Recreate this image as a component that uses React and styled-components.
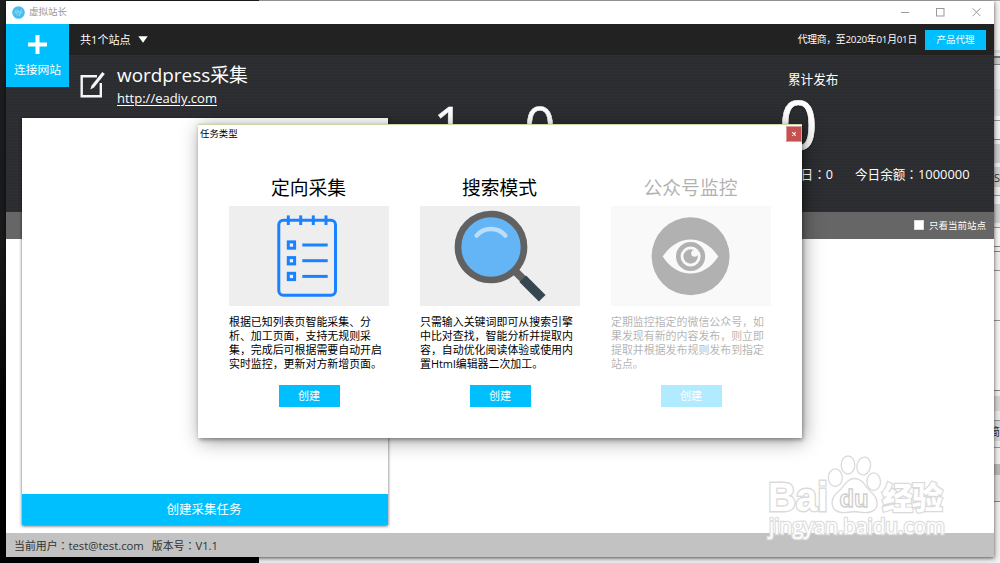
import React from "react";
import styled, { createGlobalStyle, css } from "styled-components";

const GlobalStyle = createGlobalStyle`
  * { box-sizing: border-box; }
  html, body { margin: 0; padding: 0; overflow: hidden; }
  body {
    font-family: "Open Sans", "Noto Sans CJK SC", sans-serif;
    font-size: 11px;
    color: #000;
  }
`;

const weave = css`
  background-color: #2b2d30;
  background-image:
    repeating-linear-gradient(0deg, rgba(255, 255, 255, 0.014) 0 1px, transparent 1px 3px),
    repeating-linear-gradient(90deg, rgba(0, 0, 0, 0.04) 0 1px, transparent 1px 4px);
`;

const Desktop = styled.div`
  position: relative;
  width: 1000px;
  height: 563px;
  overflow: hidden;
  display: flex;
  background: #f2f2f2;
`;

const Wallpaper = styled.div`
  width: 259px;
  height: 563px;
  background: linear-gradient(#1d1f21 0, #191a1b 240px, #141211 310px, #000 430px);
`;

const BackWindow = styled.div`
  flex: 1;
  display: flex;
  flex-direction: column;
  border-top: 1px solid #aaa;
`;

const Band = styled.div`
  height: ${(p) => p.$h}px;
  background: ${(p) => p.$c};
  flex: none;
  display: flex;
  align-items: center;
  justify-content: flex-end;
  overflow: hidden;
  font-size: 11px;
  color: #333;
`;

const Window = styled.div`
  position: absolute;
  left: 6px;
  top: 1px;
  width: 988px;
  height: 556px;
  display: flex;
  flex-direction: column;
  background: #fff;
  box-shadow: 0 1px 3px rgba(0, 0, 0, 0.5), 1px 2px 7px rgba(0, 0, 0, 0.25);
`;

const TitleBar = styled.div`
  height: 23px;
  flex: none;
  display: flex;
  align-items: center;
  padding: 0 13px 1px 6px;
  color: #999;
  font-size: 9.5px;
`;

const AppName = styled.span`
  margin-left: 4px;
  flex: 1;
  line-height: 22px;
`;

const TopBar = styled.div`
  height: 31px;
  flex: none;
  background: #222;
  color: #fff;
  display: flex;
  align-items: center;
  padding: 0 8px 0 74px;
`;

const SiteCount = styled.div`
  display: flex;
  align-items: center;
  gap: 7px;
  flex: 1;
  font-size: 11.1px;
  padding-bottom: 1px;
`;

const License = styled.span`
  font-size: 9.8px;
  letter-spacing: -0.24px;
  margin-right: 8px;
  padding-bottom: 1px;
`;

const AgentButton = styled.button`
  width: 61px;
  height: 20px;
  border: 0;
  padding: 0;
  background: #00bfff;
  color: #fff;
  font: 9.5px/20px "Open Sans", "Noto Sans CJK SC", sans-serif;
  margin-top: 1px;
`;

const Connect = styled.div`
  position: absolute;
  left: 0;
  top: 23px;
  width: 63px;
  height: 63px;
  background: #00bfff;
  color: #fff;
  display: flex;
  flex-direction: column;
  align-items: center;
  padding-top: 11px;
  gap: 7px;
  font-size: 11.8px;
  line-height: 16px;
`;

const Hero = styled.div`
  ${weave}
  height: 157px;
  flex: none;
  color: #fff;
  display: flex;
  padding-left: 74px;
`;

const Site = styled.div`
  width: 352px;
  display: flex;
  gap: 12px;
`;

const EditMark = styled.svg`
  margin-top: 16px;
  flex: none;
`;

const SiteName = styled.div`
  font-size: 18.9px;
  line-height: 24px;
  margin-top: 8px;
`;

const SiteUrl = styled.div`
  font-size: 13px;
  line-height: 18px;
  margin-top: 2px;
  text-decoration: underline;
  text-underline-offset: 2px;
  text-decoration-thickness: 1px;
`;

const Counters = styled.div`
  width: 356px;
  display: flex;
  gap: 57px;
  padding-top: 43px;
  font-size: 54px;
  line-height: 54px;
  -webkit-text-stroke: 0.5px #fff;
`;

const Counter = styled.span`
  width: 34px;
  text-align: center;
`;

const Totals = styled.div`
  display: flex;
  flex-direction: column;
  font-size: 12.6px;
  line-height: 18px;
  padding-top: 16px;
`;

const TotalValue = styled.div`
  font-size: 68px;
  line-height: 66px;
  height: 76px;
  padding-top: 2px;
  margin-left: -9px;
  -webkit-text-stroke: 0.6px #fff;
  text-shadow: 0 1px 2px rgba(0, 0, 0, 0.5);
`;

const TotalsRow = styled.div`
  display: flex;
  gap: 22px;
  white-space: nowrap;
`;

const Amount = styled.span`
  font-size: 12.9px;
`;

const WideColon = styled.span`
  font-family: "Noto Sans CJK TC", sans-serif;
`;

const FilterBar = styled.div`
  height: 27px;
  flex: none;
  background: #666;
  color: #fff;
  display: flex;
  align-items: center;
  justify-content: flex-end;
  gap: 5px;
  padding: 0 8px 1px 0;
  font-size: 9.5px;
`;

const CheckBox = styled.span`
  width: 10px;
  height: 10px;
  background: #fff;
  border: 1px solid #ddd;
`;

const Workspace = styled.div`
  flex: 1;
  background: #fff;
`;

const StatusBar = styled.div`
  height: 24px;
  flex: none;
  background: #c2c2c2;
  color: #333;
  display: flex;
  align-items: center;
  gap: 8px;
  padding: 0 0 1px 8px;
  font-size: 10.9px;
`;

const StatusValue = styled.span`
  font-size: 11.3px;
`;

const TaskPanel = styled.div`
  position: absolute;
  left: 16px;
  top: 117px;
  width: 366px;
  height: 407px;
  background: #fff;
  box-shadow: 0 1px 3px rgba(0, 0, 0, 0.65);
  display: flex;
  flex-direction: column;
  justify-content: flex-end;
`;

const NewTask = styled.button`
  height: 31px;
  border: 0;
  padding: 0 2px 0 0;
  background: #00bfff;
  color: #fff;
  font: 12.5px/31px "Open Sans", "Noto Sans CJK SC", sans-serif;
`;

const Dialog = styled.div`
  position: absolute;
  left: 198px;
  top: 124px;
  width: 604px;
  height: 314px;
  background: #fff;
  border-top: 1px solid #c9d8a4;
  box-shadow: 1px 2px 4px rgba(0, 0, 0, 0.35), 2px 3px 18px rgba(0, 0, 0, 0.38);
  display: flex;
  flex-direction: column;
`;

const DialogHead = styled.div`
  height: 16px;
  display: flex;
  justify-content: space-between;
  align-items: center;
  padding: 0 0 0 2px;
  font-size: 9.4px;
`;

const CloseButton = styled.button`
  width: 16px;
  height: 16px;
  border: 1px solid #dc9a9a;
  padding: 0;
  background: #c75050;
  margin-top: 1px;
  display: flex;
  align-items: center;
  justify-content: center;
`;

const Choices = styled.div`
  display: flex;
  gap: 31px;
  padding: 34px 0 0 31px;
`;

const Choice = styled.div`
  width: 160px;
  display: flex;
  flex-direction: column;
  align-items: center;
  opacity: ${(p) => (p.$off ? 0.3 : 1)};
`;

const ChoiceTitle = styled.div`
  font-size: 18.8px;
  line-height: 26px;
  height: 31px;
  padding-right: 1px;
`;

const Picture = styled.svg`
  display: block;
  width: 160px;
  height: 100px;
  background: #eee;
`;

const Description = styled.div`
  width: 160px;
  height: 79px;
  padding-top: 9px;
  font-size: 10.93px;
  line-height: 14px;
  white-space: nowrap;
`;

const CreateButton = styled.button`
  width: 61px;
  height: 22px;
  border: 0;
  padding: 0;
  background: #00bfff;
  color: #fff;
  font: 11px/22px "Open Sans", "Noto Sans CJK SC", sans-serif;
`;

const Watermark = styled.svg`
  position: absolute;
  left: 760px;
  top: 448px;
`;

const bands = [
  [49, "#f7f7f7"], [3, "#dedede"], [3, "#f0f0f0"], [2, "#777"], [6, "#cfcfcf"], [1, "#888"],
  [24, "#f2f2f2"], [27, "#e6e6e6"], [4, "#fafafa"], [1, "#999"], [18, "#f6f6f6"], [1, "#888"],
  [4, "#f2f2f2"], [19, "#d2d2d2"], [4, "#f2f2f2"], [20, "#d4d4d4", "S"], [8, "#f2f2f2"], [1, "#999"],
  [8, "#f4f4f4"], [19, "#d4d4d4"], [4, "#f2f2f2"], [1, "#999"], [18, "#fafafa"], [1, "#888"],
  [4, "#f4f4f4"], [1, "#888"], [18, "#f4f4f4"], [1, "#999"], [49, "#fafafa"], [1, "#999"],
  [69, "#fafafa"], [1, "#888"], [5, "#f4f4f4"], [15, "#d9d9d9"], [9, "#efefef"], [1, "#999"],
  [20, "#dadada", "简"], [6, "#efefef"], [1, "#999"], [16, "#f4f4f4"], [11, "#bcbcbc"],
  [26, "#e4e4e4"], [1, "#888"], [61, "#f3f3f3"],
];

const ListArt = () => (
  <Picture viewBox="0 0 160 100" fill="none" stroke="#1a82ff" strokeWidth="3">
    <rect x="49.8" y="14.2" width="56.7" height="75" rx="4.5" />
    {[59.3, 71.7, 84.3, 97].map((x) => (
      <path key={x} d={`M${x} 9.4V19`} />
    ))}
    {[39, 54.7, 70.4].map((y) => (
      <g key={y}>
        <rect x="59.3" y={y - 3.1} width="6.3" height="6.3" />
        <path d={`M73.3 ${y}H98.7`} />
      </g>
    ))}
  </Picture>
);

const SearchArt = () => (
  <Picture viewBox="0 0 160 100" fill="none">
    <path d="M92 62L104 74" stroke="#616161" strokeWidth="8" />
    <path d="M102.7 72.7L122.2 92.3" stroke="#37474f" strokeWidth="9.4" />
    <circle cx="71" cy="41" r="33" fill="#64b5f6" stroke="#616161" strokeWidth="6.7" />
    <path d="M56.6 29.6A18.9 18.9 0 0 1 85.4 29.6" stroke="#bbdefb" strokeWidth="4.4" strokeLinecap="round" />
  </Picture>
);

const EyeArt = () => (
  <Picture viewBox="0 0 160 100">
    <circle cx="79.6" cy="50.3" r="39" fill="#000" />
    <path d="M51.7 50.5C66.5 27.8 92.5 27.8 107.3 50.5C92.5 73.3 66.5 73.3 51.7 50.5Z" fill="#eee" />
    <circle cx="79.6" cy="50.5" r="12.3" fill="none" stroke="#000" strokeWidth="4.6" />
    <circle cx="79.6" cy="50.5" r="7.2" fill="#000" />
    <circle cx="83.6" cy="47.3" r="3.4" fill="#eee" />
  </Picture>
);

const choices = [
  {
    title: "定向采集",
    art: <ListArt />,
    lines: ["根据已知列表页智能采集、分", "析、加工页面，支持无规则采", "集，完成后可根据需要自动开启", "实时监控，更新对方新增页面。"],
  },
  {
    title: "搜索模式",
    art: <SearchArt />,
    lines: ["只需输入关键词即可从搜索引擎", "中比对查找，智能分析并提取内", "容，自动优化阅读体验或使用内", "置Html编辑器二次加工。"],
  },
  {
    title: "公众号监控",
    art: <EyeArt />,
    off: true,
    lines: ["定期监控指定的微信公众号，如", "果发现有新的内容发布，则立即", "提取并根据发布规则发布到指定", "站点。"],
  },
];

export default function App() {
  return (
    <Desktop>
      <GlobalStyle />
      <Wallpaper />
      <BackWindow>
        {bands.map(([h, c, t], i) => (
          <Band key={i} $h={h} $c={c}>{t}</Band>
        ))}
      </BackWindow>

      <Window>
        <TitleBar>
          <svg width="13" height="13" viewBox="0 0 13 13" fill="none">
            <circle cx="6.5" cy="6.5" r="6.3" fill="#49bdec" />
            <path d="M3 4.2L5.8 9.8M4.8 3L8 8.8M9.8 3.2L7.2 9.8M2.2 7.4C5 5 8 5 10.8 7" stroke="#a5dff7" strokeWidth=".7" />
          </svg>
          <AppName>虚拟站长</AppName>
          <svg width="80" height="10" viewBox="0 0 80 10" fill="none" stroke="#999">
            <path d="M0 5.5H8" />
            <rect x="35.5" y="1.5" width="7.5" height="7.5" />
            <path d="M71.5 1.2L79.5 9.2M79.5 1.2L71.5 9.2" />
          </svg>
        </TitleBar>
        <TopBar>
          <SiteCount>
            共1个站点
            <svg width="10" height="7" viewBox="0 0 10 7"><path d="M.3 .2H9.7L5 6.8Z" fill="#fff" /></svg>
          </SiteCount>
          <License>代理商，至2020年01月01日</License>
          <AgentButton>产品代理</AgentButton>
        </TopBar>
        <Hero>
          <Site>
            <EditMark width="25" height="27" viewBox="0 0 25 27" fill="none">
              <path d="M17 5.2H1.7V25.2H20.8V12" stroke="#f5f5f5" strokeWidth="2.4" />
              <path d="M10.3 18.4L11.6 14.4L22.3 .9L24.8 2.9L14 16.5Z" fill="#f5f5f5" />
            </EditMark>
            <div>
              <SiteName>wordpress采集</SiteName>
              <SiteUrl>http://eadiy.com</SiteUrl>
            </div>
          </Site>
          <Counters>
            <Counter>1</Counter>
            <Counter>0</Counter>
          </Counters>
          <Totals>
            <div>累计发布</div>
            <TotalValue>0</TotalValue>
            <TotalsRow>
              <span>今日<WideColon>：</WideColon>0</span>
              <span>今日余额<WideColon>：</WideColon><Amount>1000000</Amount></span>
            </TotalsRow>
          </Totals>
        </Hero>
        <FilterBar>
          <CheckBox />
          只看当前站点
        </FilterBar>
        <Workspace />
        <StatusBar>
          <span>当前用户<WideColon>：</WideColon><StatusValue>test@test.com</StatusValue></span>
          <span>版本号<WideColon>：</WideColon><StatusValue>V1.1</StatusValue></span>
        </StatusBar>
        <Connect>
          <svg width="19" height="19" viewBox="0 0 19 19"><path d="M9.500 0V19M0 9.500H19" stroke="#fff" strokeWidth="4" /></svg>
          连接网站
        </Connect>
        <TaskPanel>
          <NewTask>创建采集任务</NewTask>
        </TaskPanel>
      </Window>

      <Dialog>
        <DialogHead>
          任务类型
          <CloseButton>
            <svg width="4" height="4" viewBox="0 0 4 4"><path d="M.3 .3L3.7 3.7M3.7 .3L.3 3.7" stroke="#fff" strokeWidth="1.1" /></svg>
          </CloseButton>
        </DialogHead>
        <Choices>
          {choices.map((c) => (
            <Choice key={c.title} $off={c.off}>
              <ChoiceTitle>{c.title}</ChoiceTitle>
              {c.art}
              <Description>
                {c.lines.map((line) => <div key={line}>{line}</div>)}
              </Description>
              <CreateButton>创建</CreateButton>
            </Choice>
          ))}
        </Choices>
      </Dialog>

      <Watermark width="195" height="100" viewBox="0 0 195 100" fill="#fff" stroke="#dadada" strokeWidth="1.3">
        <g fontFamily='"Liberation Sans", sans-serif' fontWeight="700">
          <text x="8" y="62.500" fontSize="40" textLength="60" lengthAdjust="spacingAndGlyphs" strokeWidth="2.8" paintOrder="stroke">Bai</text>
          <ellipse cx="75.300" cy="29.700" rx="7" ry="8.800" />
          <ellipse cx="88" cy="17" rx="6.800" ry="9" />
          <ellipse cx="103.700" cy="18" rx="6.800" ry="9" transform="rotate(12 103.7 18)" />
          <ellipse cx="113.700" cy="33.700" rx="6.800" ry="8.800" />
          <path d="M94.500 30.500C87 30.500 84.500 38 79 43C73 48 70.500 53 73 59C75.500 65 82 65.500 94.500 63.500C107 65.500 114 65 116.500 59C118.500 53 116 48 110 43C105 38 102.500 30.500 94.500 30.500Z" />
          <text x="79.500" y="58.500" fontSize="23" textLength="29" lengthAdjust="spacingAndGlyphs" stroke="#cfcfcf">du</text>
        </g>
        <text x="122" y="60.500" fontFamily='"Noto Sans CJK SC", sans-serif' fontWeight="900" fontSize="31" textLength="61" strokeWidth="2.400" paintOrder="stroke">经验</text>
        <text x="9" y="86" fontFamily='"Open Sans", sans-serif' fontWeight="400" fontSize="21" textLength="176" lengthAdjust="spacingAndGlyphs" stroke="#dedede" strokeWidth="2.600" paintOrder="stroke">jingyan.baidu.com</text>
      </Watermark>
    </Desktop>
  );
}
